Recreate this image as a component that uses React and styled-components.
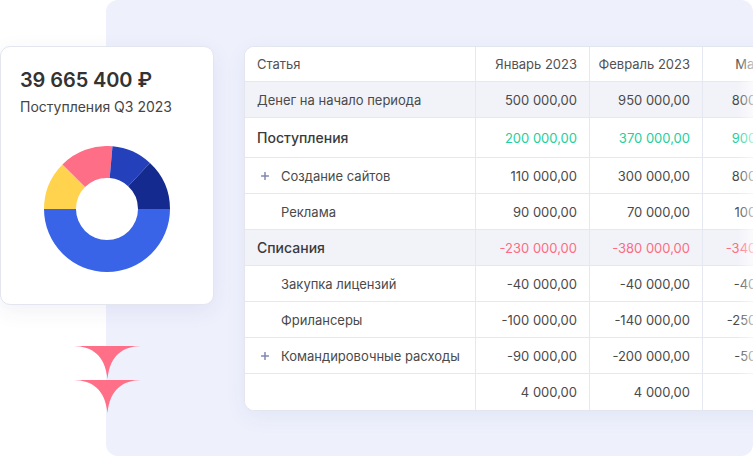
import styled, { createGlobalStyle } from "styled-components";

const GlobalStyle = createGlobalStyle`
  html, body {
    margin: 0;
    padding: 0;
    background: #fff;
    overflow: hidden;
  }
  body {
    font-family: Inter, "Noto Sans", "Liberation Sans", sans-serif;
    -webkit-font-smoothing: antialiased;
  }
  * { box-sizing: border-box; }
`;

const Stage = styled.div`
  position: relative;
  width: 753px;
  height: 457px;
  overflow: hidden;
  display: flex;
  align-items: flex-start;
  gap: 30px;
  padding-top: 46px;

  &::before {
    content: "";
    position: absolute;
    left: 106px;
    top: 0;
    right: 0;
    bottom: 1px;
    border-radius: 12px;
    background: #eef0fc;
  }
`;

const LeftColumn = styled.div`
  position: relative;
  z-index: 1;
  width: 214px;
  flex-shrink: 0;
  display: flex;
  flex-direction: column;
  align-items: center;
  gap: 41px;
`;

const SummaryCard = styled.div`
  width: 214px;
  height: 259px;
  background: #fff;
  border: 1px solid #e3e5ef;
  border-radius: 10px;
  box-shadow: 0 6px 22px rgba(50, 60, 140, 0.07);
  padding: 21px 19px 0;
  display: flex;
  flex-direction: column;
`;

const Amount = styled.div`
  font-size: 20px;
  line-height: 24px;
  font-weight: 600;
  color: #333;
  letter-spacing: -0.1px;
`;

const Caption = styled.div`
  margin-top: 5px;
  font-size: 14px;
  line-height: 20px;
  color: #454545;
`;

const ChartBox = styled.div`
  margin-top: 29px;
  display: flex;
  justify-content: center;
`;

const Arrows = styled.div`
  display: flex;
  flex-direction: column;
  gap: 1px;
`;

const TableCard = styled.div`
  position: relative;
  z-index: 1;
  flex-shrink: 0;
  width: 689px;
  background: #fff;
  border: 1px solid #e3e5ef;
  border-radius: 10px 0 0 10px;
  box-shadow: 0 6px 22px rgba(50, 60, 140, 0.06);
  overflow: hidden;

  &::after {
    content: "";
    position: absolute;
    top: 0;
    bottom: 0;
    left: 492px;
    width: 18px;
    background: linear-gradient(to right, rgba(255, 255, 255, 0), rgba(255, 255, 255, 0.75));
  }
`;

const Row = styled.div`
  display: grid;
  grid-template-columns: 231px 114px 113px 114px 116px;
  height: ${(p) => p.$h}px;
  background: ${(p) => (p.$shaded ? "#f2f3f9" : "#fff")};
  border-bottom: ${(p) => (p.$last ? "none" : "1px solid #e5e7f1")};
`;

const LabelCell = styled.div`
  display: flex;
  align-items: center;
  gap: 12px;
  padding-left: ${(p) => (p.$sub ? 16 : 12)}px;
  border-right: 1px solid #e5e7f1;
  font-size: ${(p) => (p.$section ? 14 : 13)}px;
  font-weight: ${(p) => (p.$section ? 500 : 400)};
  color: ${(p) => (p.$section ? "#3a3a3a" : "#4a4a4a")};
  white-space: nowrap;
`;

const PlusSlot = styled.span`
  width: 8px;
  height: 8px;
  display: flex;
  align-items: center;
  justify-content: center;
  flex-shrink: 0;
`;

const ValueCell = styled.div`
  display: flex;
  align-items: center;
  justify-content: flex-end;
  padding-right: 12px;
  border-right: 1px solid #e5e7f1;
  font-size: 13px;
  white-space: nowrap;
  color: ${(p) =>
    p.$tone === "green" ? "#22d09d" : p.$tone === "red" ? "#ff6b80" : "#4a4a4a"};
`;

const HeadCell = styled(ValueCell)`
  color: #525252;
`;

const HeadLabel = styled(LabelCell)`
  color: #525252;
`;

const segments = [
  { from: 0, to: 180, color: "#3a64e8" },
  { from: 180, to: 225, color: "#ffd34d" },
  { from: 225, to: 275, color: "#ff6e87" },
  { from: 275, to: 313, color: "#2441bb" },
  { from: 313, to: 360, color: "#152a8f" },
];

function arcPath(cx, cy, r, ri, a0, a1) {
  const rad = (a) => (a * Math.PI) / 180;
  const pt = (rr, a) => [cx + rr * Math.cos(rad(a)), cy + rr * Math.sin(rad(a))];
  const [x0, y0] = pt(r, a0);
  const [x1, y1] = pt(r, a1);
  const [x2, y2] = pt(ri, a1);
  const [x3, y3] = pt(ri, a0);
  const large = a1 - a0 > 180 ? 1 : 0;
  return `M${x0} ${y0} A${r} ${r} 0 ${large} 1 ${x1} ${y1} L${x2} ${y2} A${ri} ${ri} 0 ${large} 0 ${x3} ${y3} Z`;
}

function Donut() {
  return (
    <svg width="126" height="126" viewBox="0 0 126 126">
      {segments.map((s) => (
        <path key={s.from} d={arcPath(63, 63, 63, 31, s.from, s.to)} fill={s.color} />
      ))}
    </svg>
  );
}

function ArrowMark() {
  return (
    <svg width="67" height="33" viewBox="0 0 67 33">
      <path d="M0 0 H67 C49 0.5 36 9 33.5 33 C31 9 18 0.5 0 0 Z" fill="#ff7088" />
    </svg>
  );
}

function PlusIcon() {
  return (
    <svg width="8" height="8" viewBox="0 0 8 8">
      <path d="M4 0.5 V7.5 M0.5 4 H7.5" stroke="#8088b0" strokeWidth="1.5" strokeLinecap="round" />
    </svg>
  );
}

const months = ["Январь 2023", "Февраль 2023", "Март 2023", "Апрель 2023"];

const rows = [
  { label: "Денег на начало периода", shaded: true, values: ["500 000,00", "950 000,00", "800 000,00", ""] },
  { label: "Поступления", section: true, h: 40, tone: "green", values: ["200 000,00", "370 000,00", "900 000,00", ""] },
  { label: "Создание сайтов", sub: true, plus: true, values: ["110 000,00", "300 000,00", "800 000,00", ""] },
  { label: "Реклама", sub: true, values: ["90 000,00", "70 000,00", "100 000,00", ""] },
  { label: "Списания", section: true, shaded: true, tone: "red", values: ["-230 000,00", "-380 000,00", "-340 000,00", ""] },
  { label: "Закупка лицензий", sub: true, values: ["-40 000,00", "-40 000,00", "-40 000,00", ""] },
  { label: "Фрилансеры", sub: true, values: ["-100 000,00", "-140 000,00", "-250 000,00", ""] },
  { label: "Командировочные расходы", sub: true, plus: true, values: ["-90 000,00", "-200 000,00", "-50 000,00", ""] },
  { label: "", values: ["4 000,00", "4 000,00", "", ""] },
];

export default function App() {
  return (
    <>
      <GlobalStyle />
      <Stage>
        <LeftColumn>
          <SummaryCard>
            <Amount>39 665 400 ₽</Amount>
            <Caption>Поступления Q3 2023</Caption>
            <ChartBox>
              <Donut />
            </ChartBox>
          </SummaryCard>
          <Arrows>
            <ArrowMark />
            <ArrowMark />
          </Arrows>
        </LeftColumn>

        <TableCard>
          <Row $h={35}>
            <HeadLabel>Статья</HeadLabel>
            {months.map((m) => (
              <HeadCell key={m}>{m}</HeadCell>
            ))}
          </Row>
          {rows.map((r, i) => (
            <Row key={i} $h={r.h || 36} $shaded={r.shaded} $last={i === rows.length - 1}>
              <LabelCell $sub={r.sub} $section={r.section}>
                {r.sub && <PlusSlot>{r.plus && <PlusIcon />}</PlusSlot>}
                {r.label}
              </LabelCell>
              {r.values.map((v, j) => (
                <ValueCell key={j} $tone={r.tone}>
                  {v}
                </ValueCell>
              ))}
            </Row>
          ))}
        </TableCard>
      </Stage>
    </>
  );
}
